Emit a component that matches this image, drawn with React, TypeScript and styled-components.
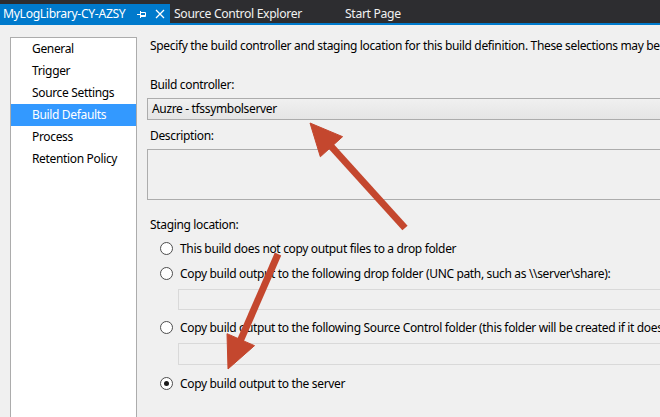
import React from "react";
import styled, { createGlobalStyle } from "styled-components";

const GlobalStyle = createGlobalStyle`
  html, body { margin: 0; padding: 0; }
  body {
    width: 660px;
    height: 417px;
    overflow: hidden;
    background: #f0f0f0;
    font-family: "Noto Sans", "Open Sans", sans-serif;
    font-size: 12px;
    letter-spacing: -0.34px;
    color: #000;
  }
  #root { position: relative; height: 417px; overflow: hidden; }
`;

const TabBar = styled.div`
  display: flex;
  align-items: flex-end;
  height: 23px;
  background: #2d2d30;
  border-bottom: 2px solid #007acc;
  white-space: nowrap;
`;

const Tab = styled.div<{ $active?: boolean; $width: number }>`
  display: flex;
  align-items: center;
  box-sizing: border-box;
  width: ${(p) => p.$width}px;
  height: 19px;
  padding-left: ${(p) => (p.$active ? 3 : 4)}px;
  background: ${(p) => (p.$active ? "#007acc" : "transparent")};
  color: ${(p) => (p.$active ? "#ffffff" : "#f1f1f1")};
  font-size: 12.2px;
  flex: none;
`;

const TabTitle = styled.span`
  flex: 1;
  min-width: 0;
`;

const TabIcon = styled.svg<{ $mr: number }>`
  flex: none;
  margin-right: ${(p) => p.$mr}px;
`;

const Body = styled.div`
  display: flex;
  padding: 12px 0 0 10px;
  height: 380px;
`;

const Nav = styled.ul`
  list-style: none;
  margin: 0;
  padding: 0;
  width: 125px;
  flex: none;
  height: 400px;
  background: #ffffff;
  border: 1px solid #acacac;
`;

const NavItem = styled.li<{ $selected?: boolean }>`
  height: 22px;
  line-height: 22px;
  padding-left: 21px;
  background: ${(p) => (p.$selected ? "#3399ff" : "transparent")};
  color: ${(p) => (p.$selected ? "#ffffff" : "#000000")};
`;

const Main = styled.div`
  flex: none;
  width: 560px;
  margin-left: 10px;
  padding-top: 1px;
  white-space: nowrap;
`;

const Text = styled.div<{ $mt?: number }>`
  height: 16px;
  line-height: 16px;
  margin-left: 3px;
  margin-top: ${(p) => p.$mt ?? 0}px;
`;

const ComboBox = styled.div`
  box-sizing: border-box;
  height: 22px;
  margin-top: 5px;
  padding-left: 4px;
  line-height: 20px;
  border: 1px solid #acacac;
  border-right: none;
  background: linear-gradient(#f0f0f0, #e5e5e5);
`;

const DescBox = styled.div`
  box-sizing: border-box;
  height: 51px;
  margin-top: 5px;
  border: 1px solid #acacac;
  border-right: none;
  background: #f0f0f0;
`;

const RadioRow = styled.label<{ $mt: number }>`
  display: flex;
  align-items: center;
  height: 16px;
  margin-top: ${(p) => p.$mt}px;
  margin-left: 13px;
`;

const RadioCircle = styled.span<{ $checked?: boolean }>`
  box-sizing: border-box;
  flex: none;
  width: 13px;
  height: 13px;
  margin-right: 7px;
  border-radius: 50%;
  border: 1px solid #4d4d4d;
  background: #ffffff;
  display: flex;
  align-items: center;
  justify-content: center;
  &::after {
    content: "";
    display: ${(p) => (p.$checked ? "block" : "none")};
    width: 5px;
    height: 5px;
    border-radius: 50%;
    background: #1a1a1a;
  }
`;

const PathInput = styled.div<{ $h: number }>`
  box-sizing: border-box;
  height: ${(p) => p.$h}px;
  margin-top: 8px;
  margin-left: 31px;
  border: 1px solid #d9d9d9;
  border-right: none;
  background: #f0f0f0;
`;

const Overlay = styled.svg`
  position: absolute;
  left: 0;
  top: 0;
  pointer-events: none;
`;

function arrow(tx: number, ty: number, ex: number, ey: number) {
  const dx = ex - tx;
  const dy = ey - ty;
  const len = Math.hypot(dx, dy);
  const ux = dx / len;
  const uy = dy / len;
  const hl = 32;
  const hw = 15;
  const bx = ex - ux * hl;
  const by = ey - uy * hl;
  const px = -uy * hw;
  const py = ux * hw;
  const shaftEndX = ex - ux * (hl - 4);
  const shaftEndY = ey - uy * (hl - 4);
  return (
    <g fill="#c4472e" stroke="#c4472e">
      <line x1={tx} y1={ty} x2={shaftEndX} y2={shaftEndY} strokeWidth={7} />
      <polygon
        points={`${ex},${ey} ${bx + px},${by + py} ${bx - px},${by - py}`}
        strokeWidth={1}
        strokeLinejoin="miter"
      />
    </g>
  );
}

export default function App() {
  const navItems = [
    "General",
    "Trigger",
    "Source Settings",
    "Build Defaults",
    "Process",
    "Retention Policy",
  ];
  return (
    <>
      <GlobalStyle />
      <TabBar>
        <Tab $active $width={170}>
          <TabTitle>MyLogLibrary-CY-AZSY</TabTitle>
          <TabIcon $mr={8} width="10" height="10" viewBox="0 0 10 10">
            <path d="M0 5.5H3.5M3.5 2V9M3.5 3.5H8.5V7.5H3.5M3.5 6.5H8.5" stroke="#fff" strokeWidth="1" fill="none" />
          </TabIcon>
          <TabIcon $mr={5} width="10" height="10" viewBox="0 0 10 10">
            <path d="M1 1L9 9M9 1L1 9" stroke="#fff" strokeWidth="1.3" fill="none" />
          </TabIcon>
        </Tab>
        <Tab $width={171}>Source Control Explorer</Tab>
        <Tab $width={200}>Start Page</Tab>
      </TabBar>
      <Body>
        <Nav>
          {navItems.map((n) => (
            <NavItem key={n} $selected={n === "Build Defaults"}>
              {n}
            </NavItem>
          ))}
        </Nav>
        <Main>
          <Text>
            Specify the build controller and staging location for this build definition. These selections may be
            changed when queuing a build.
          </Text>
          <Text $mt={23}>Build controller:</Text>
          <ComboBox>Auzre - tfssymbolserver</ComboBox>
          <Text $mt={8}>Description:</Text>
          <DescBox />
          <Text $mt={17}>Staging location:</Text>
          <RadioRow $mt={7}>
            <RadioCircle />
            This build does not copy output files to a drop folder
          </RadioRow>
          <RadioRow $mt={9}>
            <RadioCircle />
            Copy build output to the following drop folder (UNC path, such as \\server\share):
          </RadioRow>
          <PathInput $h={21} />
          <RadioRow $mt={9}>
            <RadioCircle />
            Copy build output to the following Source Control folder (this folder will be created if it doesn't exist):
          </RadioRow>
          <PathInput $h={22} />
          <RadioRow $mt={10}>
            <RadioCircle $checked />
            Copy build output to the server
          </RadioRow>
        </Main>
      </Body>
      <Overlay width="660" height="417" viewBox="0 0 660 417">
        {arrow(405, 228, 310, 123)}
        {arrow(278, 254, 228, 369)}
      </Overlay>
    </>
  );
}
